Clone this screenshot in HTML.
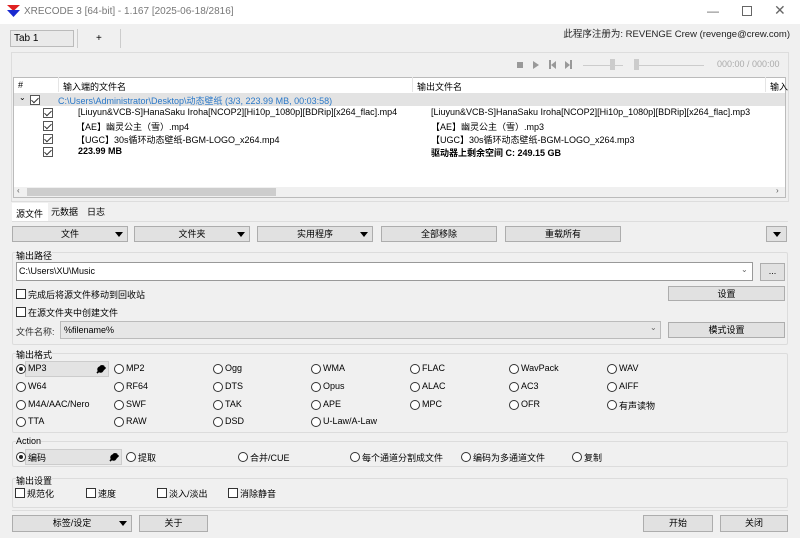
<!DOCTYPE html>
<html><head><meta charset="utf-8"><style>
*{box-sizing:border-box;margin:0;padding:0}
body{width:800px;height:538px;overflow:hidden;background:#f0f0f0;font-family:"Liberation Sans","Noto Sans CJK SC",sans-serif;font-size:9px;color:#000;position:relative}
.a{position:absolute;white-space:nowrap}
.btn{position:absolute;background:#e1e1e1;border:1px solid #adadad;text-align:center;line-height:14px}
.grp{position:absolute;border:1px solid #dcdcdc;border-radius:2px}
.cb{position:absolute;width:10px;height:10px;border:1px solid #333;background:#fff}
.ck{position:absolute;width:10px;height:10px;border:1px solid #555;background:#fff}
.ck:after{content:"";position:absolute;left:2px;top:0px;width:3px;height:6px;border:solid #333;border-width:0 1px 1px 0;transform:rotate(45deg)}
.rb{position:absolute;width:10px;height:10px;border:1px solid #333;border-radius:50%;background:#fff}
.rb.on:after{content:"";position:absolute;left:2px;top:2px;width:4px;height:4px;border-radius:50%;background:#222}
.tri{display:inline-block;width:0;height:0;border-left:4px solid transparent;border-right:4px solid transparent;border-top:5px solid #000;position:absolute;top:5px}
</style></head><body>
<div class="a" style="left:0;top:0;width:800px;height:24px;background:#fff"></div>
<svg class="a" style="left:7px;top:5px" width="13" height="13" viewBox="0 0 13 13"><path d="M0 0H13L6.5 6Z" fill="#e02020"/><path d="M0 5H13L6.5 12Z" fill="#1a2ad0"/></svg>
<div class="a" style="left:24px;top:6px;color:#777;font-size:10px">XRECODE 3 [64-bit] - 1.167 [2025-06-18/2816]</div>
<div class="a" style="left:707px;top:4px;color:#666;font-size:12px">—</div>
<div class="a" style="left:742px;top:6px;width:10px;height:10px;border:1px solid #666"></div>
<div class="a" style="left:774px;top:2px;color:#666;font-size:14px">✕</div>

<div class="a" style="left:10px;top:30px;width:64px;height:17px;border:1px solid #bbb;background:#eaeaea;padding:2px 3px;font-size:10px">Tab 1</div>
<div class="a" style="left:77px;top:29px;width:1px;height:19px;background:#ccc"></div>
<div class="a" style="left:96px;top:33px;font-size:10px">+</div>
<div class="a" style="left:120px;top:29px;width:1px;height:19px;background:#ccc"></div>
<div class="a" style="right:10px;top:26px;font-size:9.5px;color:#222">此程序注册为: REVENGE Crew (revenge@crew.com)</div>

<div class="a" style="left:11px;top:52px;width:778px;height:150px;border:1px solid #ddd;background:#f0f0f0"></div>
<div class="a" style="left:517px;top:62px;width:6px;height:6px;background:#999"></div>
<div class="a" style="left:533px;top:61px;border-left:6px solid #999;border-top:4px solid transparent;border-bottom:4px solid transparent"></div>
<div class="a" style="left:549px;top:60px;width:2px;height:9px;background:#999"></div><div class="a" style="left:551px;top:61px;border-right:5px solid #999;border-top:4px solid transparent;border-bottom:4px solid transparent"></div>
<div class="a" style="left:565px;top:61px;border-left:5px solid #999;border-top:4px solid transparent;border-bottom:4px solid transparent"></div><div class="a" style="left:570px;top:60px;width:2px;height:9px;background:#999"></div>
<div class="a" style="left:583px;top:65px;width:40px;height:1px;background:#ccc"></div><div class="a" style="left:610px;top:59px;width:5px;height:11px;background:#ccc"></div>
<div class="a" style="left:634px;top:65px;width:70px;height:1px;background:#ccc"></div><div class="a" style="left:634px;top:59px;width:5px;height:11px;background:#ccc"></div>
<div class="a" style="left:717px;top:59px;color:#aaa">000:00 / 000:00</div>

<div class="a" style="left:13px;top:77px;width:773px;height:121px;border:1px solid #bbb;background:#fff"></div>
<div class="a" style="left:18px;top:80px">#</div>
<div class="a" style="left:58px;top:77px;width:1px;height:15px;background:#e5e5e5"></div>
<div class="a" style="left:63px;top:80px">输入端的文件名</div>
<div class="a" style="left:412px;top:77px;width:1px;height:15px;background:#e5e5e5"></div>
<div class="a" style="left:417px;top:80px">输出文件名</div>
<div class="a" style="left:765px;top:77px;width:1px;height:15px;background:#e5e5e5"></div>
<div class="a" style="left:770px;top:80px">输入</div>
<div class="a" style="left:14px;top:93px;width:771px;height:13px;background:#e3e3e3"></div>
<div class="a" style="left:19px;top:93px;font-size:8px">⌄</div>
<div class="ck" style="left:30px;top:95px"></div>
<div class="a" style="left:58px;top:94px;color:#2a78c8">C:\Users\Administrator\Desktop\动态壁纸 (3/3, 223.99 MB, 00:03:58)</div>
<div class="ck" style="left:43px;top:108px"></div><div class="ck" style="left:43px;top:121px"></div><div class="ck" style="left:43px;top:134px"></div><div class="ck" style="left:43px;top:147px"></div>
<div class="a" style="left:78px;top:107px">[Liuyun&amp;VCB-S]HanaSaku Iroha[NCOP2][Hi10p_1080p][BDRip][x264_flac].mp4</div>
<div class="a" style="left:76px;top:120px">【AE】幽灵公主（雪）.mp4</div>
<div class="a" style="left:76px;top:133px">【UGC】30s循环动态壁纸-BGM-LOGO_x264.mp4</div>
<div class="a" style="left:78px;top:146px;font-weight:bold">223.99 MB</div>
<div class="a" style="left:431px;top:107px">[Liuyun&amp;VCB-S]HanaSaku Iroha[NCOP2][Hi10p_1080p][BDRip][x264_flac].mp3</div>
<div class="a" style="left:431px;top:120px">【AE】幽灵公主（雪）.mp3</div>
<div class="a" style="left:431px;top:133px">【UGC】30s循环动态壁纸-BGM-LOGO_x264.mp3</div>
<div class="a" style="left:431px;top:146px;font-weight:bold">驱动器上剩余空间 C: 249.15 GB</div>
<div class="a" style="left:14px;top:187px;width:771px;height:10px;background:#f0f0f0"></div>
<div class="a" style="left:27px;top:188px;width:249px;height:8px;background:#cdcdcd"></div>
<div class="a" style="left:17px;top:186px;color:#555;font-size:8px">‹</div>
<div class="a" style="left:776px;top:186px;color:#555;font-size:8px">›</div>

<div class="a" style="left:12px;top:203px;width:36px;height:18px;background:#fff"></div>
<div class="a" style="left:16px;top:207px">源文件</div>
<div class="a" style="left:51px;top:205px">元数据</div>
<div class="a" style="left:87px;top:205px">日志</div>
<div class="a" style="left:12px;top:221px;width:776px;height:1px;background:#ddd"></div>

<div class="btn" style="left:12px;top:226px;width:116px;height:16px">文件<span class="tri" style="left:102px"></span></div>
<div class="btn" style="left:134px;top:226px;width:116px;height:16px">文件夹<span class="tri" style="left:102px"></span></div>
<div class="btn" style="left:257px;top:226px;width:116px;height:16px">实用程序<span class="tri" style="left:102px"></span></div>
<div class="btn" style="left:381px;top:226px;width:116px;height:16px">全部移除</div>
<div class="btn" style="left:505px;top:226px;width:116px;height:16px">重载所有</div>
<div class="btn" style="left:766px;top:226px;width:21px;height:16px"><span class="tri" style="left:6px"></span></div>

<div class="grp" style="left:12px;top:252px;width:776px;height:93px"></div>
<div class="a" style="left:16px;top:249px;background:#f0f0f0">输出路径</div>
<div class="a" style="left:16px;top:262px;width:737px;height:19px;border:1px solid #999;background:#fff;padding:3px 2px">C:\Users\XU\Music</div>
<div class="a" style="left:741px;top:265px;color:#666;font-size:8px">⌄</div>
<div class="btn" style="left:760px;top:263px;width:25px;height:18px">...</div>
<div class="cb" style="left:16px;top:289px"></div><div class="a" style="left:28px;top:288px">完成后将源文件移动到回收站</div>
<div class="btn" style="left:668px;top:286px;width:117px;height:15px">设置</div>
<div class="cb" style="left:16px;top:307px"></div><div class="a" style="left:28px;top:306px">在源文件夹中创建文件</div>
<div class="a" style="left:16px;top:325px;color:#333">文件名称:</div>
<div class="a" style="left:60px;top:321px;width:601px;height:18px;border:1px solid #bbb;background:#e6e6e6;padding:3px 3px">%filename%</div>
<div class="a" style="left:650px;top:323px;color:#666;font-size:8px">⌄</div>
<div class="btn" style="left:668px;top:322px;width:117px;height:16px">模式设置</div>

<div class="grp" style="left:12px;top:353px;width:776px;height:80px"></div>
<div class="a" style="left:16px;top:348px;background:#f0f0f0">输出格式</div>
<div class="a" style="left:25px;top:361px;width:84px;height:16px;background:#e3e3e3;border:1px solid #ccc"></div>
<svg class="a" style="left:96px;top:364px" width="10" height="10" viewBox="0 0 10 10"><path d="M1 9L5 5M4 3a2.5 2.5 0 1 0 3 3L9 4 7.5 2.5 6 4 5.5 3.5 7 2A2.5 2.5 0 0 0 4 3Z" stroke="#000" stroke-width="1.6" fill="#000"/></svg>

<div class="grp" style="left:12px;top:441px;width:776px;height:26px"></div>
<div class="a" style="left:16px;top:436px;background:#f0f0f0">Action</div>
<div class="a" style="left:25px;top:449px;width:97px;height:16px;background:#e3e3e3;border:1px solid #ccc"></div>
<svg class="a" style="left:109px;top:452px" width="10" height="10" viewBox="0 0 10 10"><path d="M1 9L5 5M4 3a2.5 2.5 0 1 0 3 3L9 4 7.5 2.5 6 4 5.5 3.5 7 2A2.5 2.5 0 0 0 4 3Z" stroke="#000" stroke-width="1.6" fill="#000"/></svg>

<div class="grp" style="left:12px;top:478px;width:776px;height:30px"></div>
<div class="a" style="left:16px;top:474px;background:#f0f0f0">输出设置</div>
<div class="cb" style="left:15px;top:488px"></div><div class="a" style="left:27px;top:487px">规范化</div>
<div class="cb" style="left:86px;top:488px"></div><div class="a" style="left:98px;top:487px">速度</div>
<div class="cb" style="left:157px;top:488px"></div><div class="a" style="left:169px;top:487px">淡入/淡出</div>
<div class="cb" style="left:228px;top:488px"></div><div class="a" style="left:240px;top:487px">消除静音</div>
<div class="a" style="left:12px;top:510px;width:776px;height:1px;background:#ddd"></div>

<div class="btn" style="left:12px;top:515px;width:120px;height:17px">标签/设定<span class="tri" style="left:106px"></span></div>
<div class="btn" style="left:139px;top:515px;width:69px;height:17px">关于</div>
<div class="btn" style="left:643px;top:515px;width:70px;height:17px">开始</div>
<div class="btn" style="left:720px;top:515px;width:68px;height:17px">关闭</div>

<div class="rb on" style="left:16px;top:364px"></div><div class="a" style="left:28px;top:363px">MP3</div>
<div class="rb" style="left:114px;top:364px"></div><div class="a" style="left:126px;top:363px">MP2</div>
<div class="rb" style="left:213px;top:364px"></div><div class="a" style="left:225px;top:363px">Ogg</div>
<div class="rb" style="left:311px;top:364px"></div><div class="a" style="left:323px;top:363px">WMA</div>
<div class="rb" style="left:410px;top:364px"></div><div class="a" style="left:422px;top:363px">FLAC</div>
<div class="rb" style="left:509px;top:364px"></div><div class="a" style="left:521px;top:363px">WavPack</div>
<div class="rb" style="left:607px;top:364px"></div><div class="a" style="left:619px;top:363px">WAV</div>
<div class="rb" style="left:16px;top:382px"></div><div class="a" style="left:28px;top:381px">W64</div>
<div class="rb" style="left:114px;top:382px"></div><div class="a" style="left:126px;top:381px">RF64</div>
<div class="rb" style="left:213px;top:382px"></div><div class="a" style="left:225px;top:381px">DTS</div>
<div class="rb" style="left:311px;top:382px"></div><div class="a" style="left:323px;top:381px">Opus</div>
<div class="rb" style="left:410px;top:382px"></div><div class="a" style="left:422px;top:381px">ALAC</div>
<div class="rb" style="left:509px;top:382px"></div><div class="a" style="left:521px;top:381px">AC3</div>
<div class="rb" style="left:607px;top:382px"></div><div class="a" style="left:619px;top:381px">AIFF</div>
<div class="rb" style="left:16px;top:400px"></div><div class="a" style="left:28px;top:399px">M4A/AAC/Nero</div>
<div class="rb" style="left:114px;top:400px"></div><div class="a" style="left:126px;top:399px">SWF</div>
<div class="rb" style="left:213px;top:400px"></div><div class="a" style="left:225px;top:399px">TAK</div>
<div class="rb" style="left:311px;top:400px"></div><div class="a" style="left:323px;top:399px">APE</div>
<div class="rb" style="left:410px;top:400px"></div><div class="a" style="left:422px;top:399px">MPC</div>
<div class="rb" style="left:509px;top:400px"></div><div class="a" style="left:521px;top:399px">OFR</div>
<div class="rb" style="left:607px;top:400px"></div><div class="a" style="left:619px;top:399px">有声读物</div>
<div class="rb" style="left:16px;top:417px"></div><div class="a" style="left:28px;top:416px">TTA</div>
<div class="rb" style="left:114px;top:417px"></div><div class="a" style="left:126px;top:416px">RAW</div>
<div class="rb" style="left:213px;top:417px"></div><div class="a" style="left:225px;top:416px">DSD</div>
<div class="rb" style="left:311px;top:417px"></div><div class="a" style="left:323px;top:416px">U-Law/A-Law</div>

<div class="rb on" style="left:16px;top:452px"></div><div class="a" style="left:28px;top:451px">编码</div>
<div class="rb" style="left:126px;top:452px"></div><div class="a" style="left:138px;top:451px">提取</div>
<div class="rb" style="left:238px;top:452px"></div><div class="a" style="left:250px;top:451px">合并/CUE</div>
<div class="rb" style="left:350px;top:452px"></div><div class="a" style="left:362px;top:451px">每个通道分割成文件</div>
<div class="rb" style="left:461px;top:452px"></div><div class="a" style="left:473px;top:451px">编码为多通道文件</div>
<div class="rb" style="left:572px;top:452px"></div><div class="a" style="left:584px;top:451px">复制</div>
</body></html>
